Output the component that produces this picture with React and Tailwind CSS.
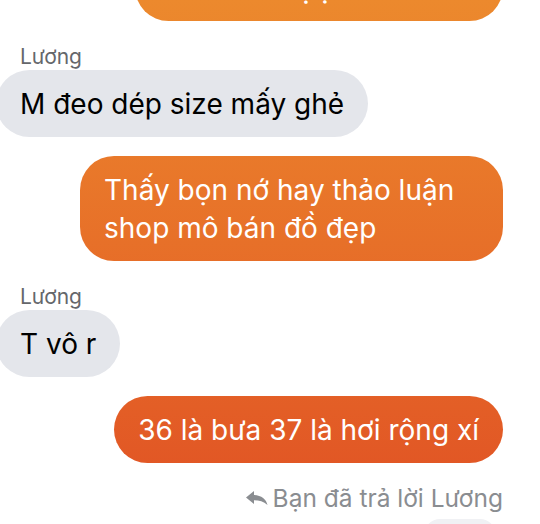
const grad =
  "bg-fixed bg-linear-to-b from-[#ec892d] to-[#e05024] text-white";

function Label({ children, className = "" }) {
  return (
    <div className={`pl-5 text-[21px] leading-6 text-[#65676b] ${className}`}>
      {children}
    </div>
  );
}

function Incoming({ children, className = "" }) {
  return (
    <div
      className={`self-start -ml-1 rounded-[34px] bg-[#e4e6eb] px-6 py-[14.5px] text-[28px] leading-[38px] text-black ${className}`}
    >
      {children}
    </div>
  );
}

function Outgoing({ children, className = "" }) {
  return (
    <div
      className={`self-end mr-[37px] rounded-[34px] px-6 py-[14.5px] text-[28px] leading-[38px] ${grad} ${className}`}
    >
      {children}
    </div>
  );
}

function ReplyIcon() {
  return (
    <svg viewBox="0 0 22 14" className="h-[14px] w-[22px] fill-[#8a8d91]">
      <path d="M8 0L0 6.5L8 13V9.2C13.5 9.2 17.5 10.6 21.5 14C20.3 8.2 15.6 4.2 8 3.9Z" />
    </svg>
  );
}

export default function App() {
  return (
    <div className="w-[540px] h-[524px] overflow-hidden bg-white font-['Inter',sans-serif] flex flex-col">
      <Outgoing className="-mt-[46px] w-[368px] text-right !pr-[170px] whitespace-nowrap">
        rồi chị ạ
      </Outgoing>

      <Label className="mt-[23.5px] mb-[1.5px]">Lương</Label>
      <Incoming>M đeo dép size mấy ghẻ</Incoming>

      <Outgoing className="mt-[19px] w-[423px]">
        Thấy bọn nớ hay thảo luận
        <br />
        shop mô bán đồ đẹp
      </Outgoing>

      <Label className="mt-[24px] mb-px">Lương</Label>
      <Incoming>T vô r</Incoming>

      <Outgoing className="mt-[19px]">36 là bưa 37 là hơi rộng xí</Outgoing>

      <div className="self-end mr-[37px] mt-[20.5px] flex items-center gap-[5px] text-[24.5px] leading-7 text-[#8a8d91]">
        <ReplyIcon />
        Bạn đã trả lời Lương
      </div>

      <div className="self-end mr-[44px] mt-[7px] h-8 w-[72px] shrink-0 rounded-full bg-[#f0f1f4]" />
    </div>
  );
}
